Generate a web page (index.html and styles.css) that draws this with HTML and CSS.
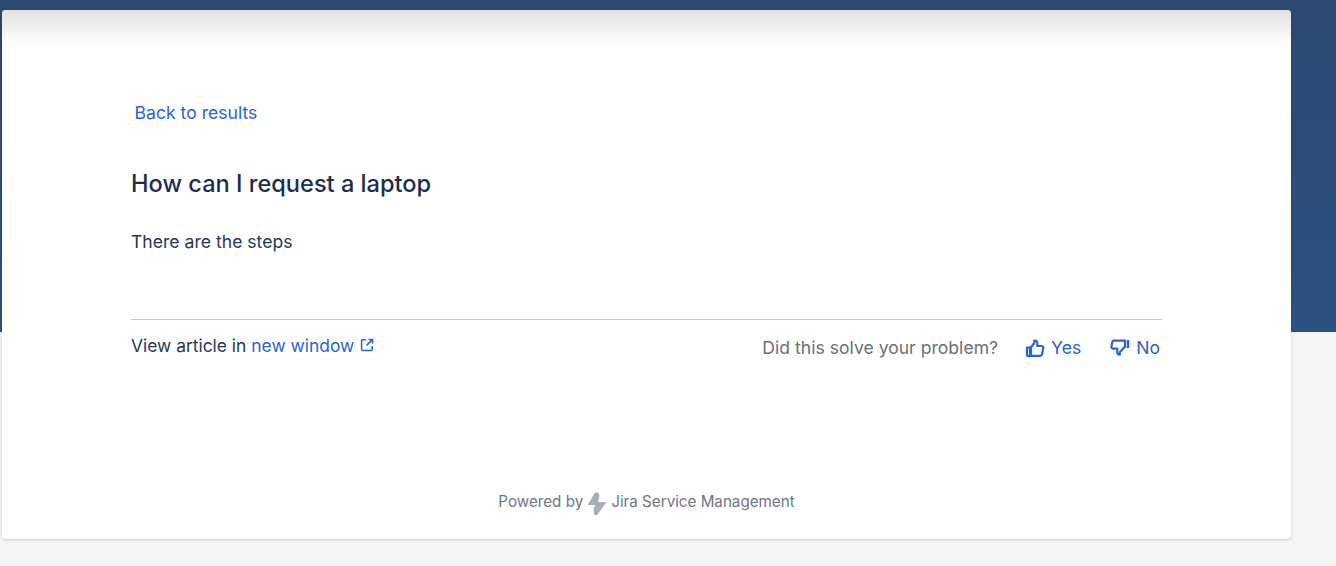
FILE: index.html
```html
<!DOCTYPE html>
<html lang="en">
<head>
<meta charset="utf-8">
<title>How can I request a laptop</title>
<link rel="stylesheet" href="styles.css">
</head>
<body>
<div class="page">
  <main class="card">
    <div class="card-fade"></div>
    <div class="content">
      <a class="back" href="#">Back to results</a>
      <h1 class="title">How can I request a laptop</h1>
      <p class="body-text">There are the steps</p>
      <div class="article-foot">
        <div class="view">View article in <a class="link" href="#">new window</a>
          <svg class="ext" width="16" height="16" viewBox="0 0 16 16" fill="none" stroke="currentColor" stroke-width="1.5"><path d="M7 2.8H3.6a1 1 0 0 0-1 1v8.600a1 1 0 0 0 1 1h8.600a1 1 0 0 0 1-1V9"/><path d="M9.500 2.400h4.100v4.100"/><path d="M13.400 2.600 7.600 8.400"/></svg>
        </div>
        <div class="feedback">
          <span class="question">Did this solve your problem?</span>
          <a class="vote yes" href="#">
            <svg width="20" height="20" viewBox="0 0 20 20" fill="none" stroke="currentColor" stroke-width="2.200" stroke-linejoin="round"><path d="M2 9.500h3v8.600H3a1 1 0 0 1-1-1z"/><path d="M6 9.200 9.300 5V2.600c1.800-.4 3 .8 3 2.500V8h4.500c1 0 1.700.9 1.500 1.900l-1.200 6.300a2 2 0 0 1-2 1.700H6z"/></svg>
            <span>Yes</span>
          </a>
          <a class="vote no" href="#">
            <svg width="20" height="20" viewBox="0 0 20 20" fill="none" stroke="currentColor" stroke-width="2.200" stroke-linejoin="round"><path d="M15 2.600H4.200a2 2 0 0 0-2 1.700l-.7 4.300c-.2 1.100.6 2 1.600 2h4.200v3.800c0 1.400 1 2.300 2.600 2.200v-2.400L13.500 10 15 9z"/><path d="M18 2v8" stroke-width="2.400"/></svg>
            <span>No</span>
          </a>
        </div>
      </div>
    </div>
    <footer class="powered">
      <span>Powered by</span>
      <svg class="bolt" width="22" height="26" viewBox="0 0 22 26"><path fill="#a5adba" d="M9 1.500h3.500Q14 6 12.500 9L12 11h7q1.500 0 .5 1.500L11 24H8.500Q7 20 8.500 16l1-2H3q-1.500 0-.5-1.500z"/></svg>
      <span>Jira Service Management</span>
    </footer>
  </main>
</div>
</body>
</html>
```
FILE: styles.css
```css
* { box-sizing: border-box; }
html, body { margin: 0; height: 100%; }
body {
  font-family: Inter, "Liberation Sans", sans-serif;
  color: #253858;
  overflow: hidden;
}
.page {
  height: 566px;
  padding: 10px 45px 0 2px;
  background: linear-gradient(180deg, #2a4a70 0, #2c5282 332px, #f4f5f7 332px, #f4f5f7 100%);
}
.card {
  height: 529px;
  background: #fff;
  border-radius: 4px;
  box-shadow: 0 1px 3px rgba(9, 30, 66, .2);
  display: flex;
  flex-direction: column;
  overflow: hidden;
}
.card-fade {
  height: 35px;
  flex: none;
  background: linear-gradient(180deg, #e1e1e1, #fff);
}
.content {
  padding: 57px 129px 0 129px;
  flex: 1;
}
a { text-decoration: none; color: #2b62d6; }
.back {
  display: block;
  margin-left: 3.500px;
  font-size: 17.600px;
  line-height: 22px;
}
.title {
  margin: 45px 0 0;
  font-size: 23.600px;
  line-height: 30px;
  font-weight: 500;
  color: #1f2d4d;
}
.body-text {
  margin: 31px 0 0;
  font-size: 17.600px;
  line-height: 24px;
}
.article-foot {
  margin-top: 65px;
  border-top: 1px solid #c1c7d0;
  padding-top: 14px;
  display: flex;
  justify-content: space-between;
  align-items: flex-start;
}
.view {
  font-size: 17.400px;
  line-height: 24px;
  display: flex;
  align-items: center;
  gap: 5px;
}
.ext { color: #2b62d6; margin: -3px 0 0 0; }
.feedback {
  display: flex;
  align-items: center;
  font-size: 17.600px;
  line-height: 26px;
  padding-right: 2px;
  margin-top: 1px;
}
.question { color: #6b6f76; margin-right: 27px; }
.vote { display: flex; align-items: center; gap: 6px; }
.yes { margin-right: 29px; }
.powered {
  height: 48px;
  flex: none;
  display: flex;
  align-items: flex-start;
  justify-content: center;
  gap: 3px;
  font-size: 15.200px;
  line-height: 22px;
  color: #6b778c;
}
```
